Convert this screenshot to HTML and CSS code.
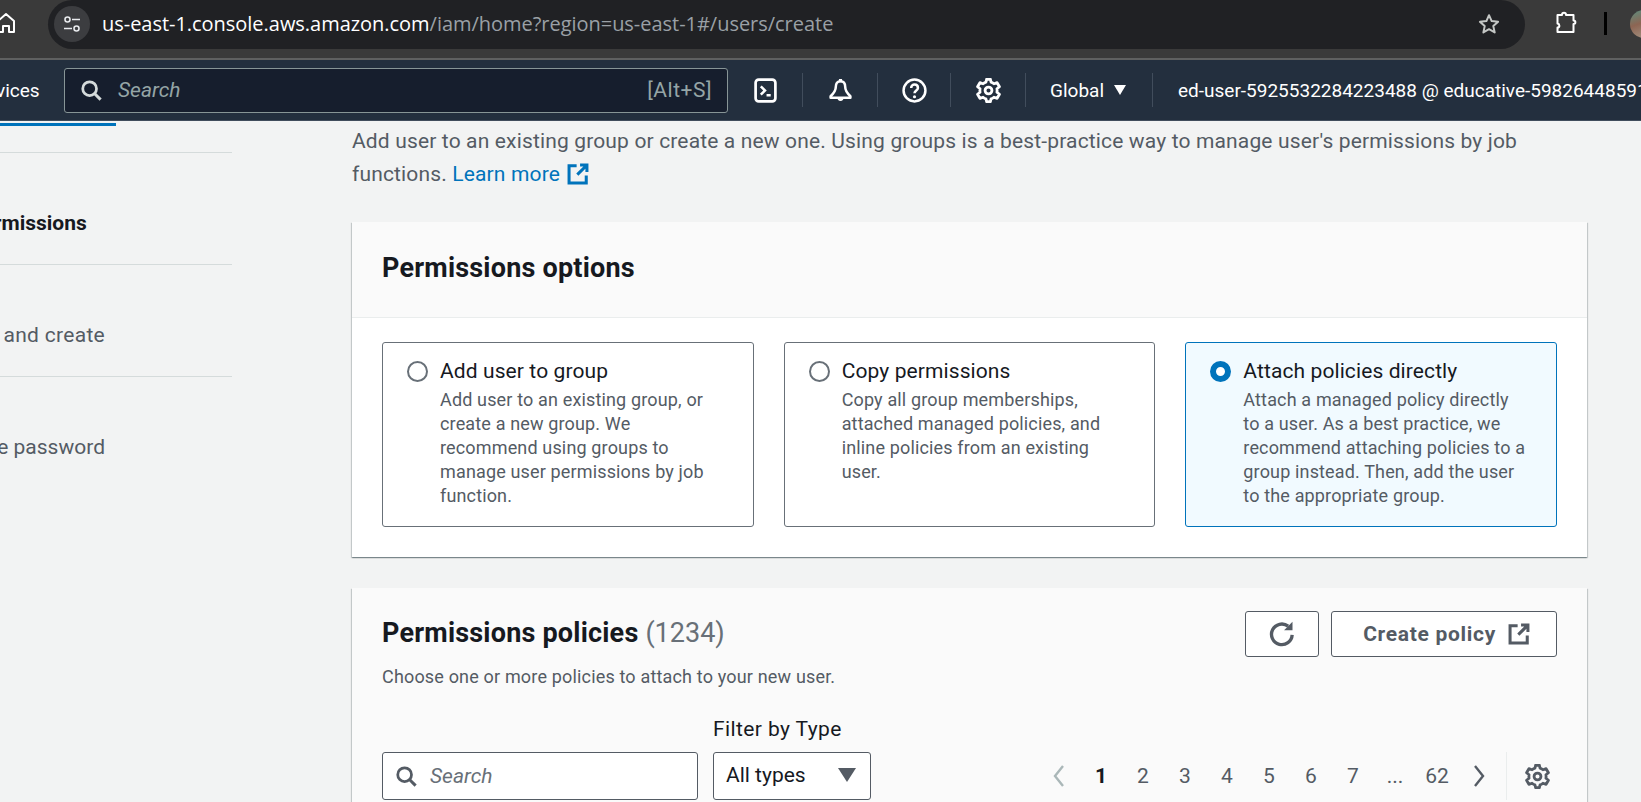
FILE: index.html
```html
<!DOCTYPE html>
<html>
<head>
<meta charset="UTF-8">
<title>Create user | IAM</title>
<link rel="stylesheet" href="styles.css">
</head>
<body>
	<svg class="sprite">
		<symbol id="i-search" viewBox="0 0 16 16"><circle cx="7" cy="7" r="5" fill="none" stroke="currentColor" stroke-width="2"/><path d="M10.7 10.7 15 15" fill="none" stroke="currentColor" stroke-width="2.2"/></symbol>
		<symbol id="i-gear" viewBox="0 0 16 16"><path d="M13.5 8c0-.4 0-.8-.1-1.1l1.6-1.3-1.5-2.6-2 .7c-.6-.5-1.2-.9-1.9-1.1L9.2.8H6.8l-.4 1.8c-.7.2-1.3.6-1.9 1.1l-2-.7L1 5.6l1.6 1.3c-.1.3-.1.7-.1 1.1s0 .8.1 1.1L1 10.4 2.500 13l2-.7c.6.5 1.2.9 1.9 1.1l.4 1.8h2.400l.4-1.8c.7-.2 1.3-.6 1.9-1.1l2 .7 1.500-2.600-1.600-1.300c.1-.3.1-.7.1-1.100z" fill="none" stroke="currentColor" stroke-width="1.800" stroke-linejoin="round"/><circle cx="8" cy="8" r="2.200" fill="none" stroke="currentColor" stroke-width="1.800"/></symbol>
		<symbol id="i-external" viewBox="0 0 16 16"><path d="M7 2H1.500v12.500H14V9M9.500 1.500h5v5M14 2 7.500 8.500" fill="none" stroke="currentColor" stroke-width="2.200"/></symbol>
	</svg>

	<!-- browser chrome -->
	<div class="browser-bar">
		<svg class="home-icon" viewBox="0 0 24 24"><path d="M-2 10 6 3l8 7v11H9v-6H3v6h-5z" fill="none" stroke="#fff" stroke-width="2" stroke-linejoin="round"/></svg>
		<div class="url-pill">
			<span class="site-info">
				<svg viewBox="0 0 20 20" width="20" height="20"><circle cx="5.500" cy="5.500" r="2.500" fill="none" stroke="#e8eaed" stroke-width="1.600"/><path d="M10 5.500h8M2 14.500h8" stroke="#e8eaed" stroke-width="1.600"/><circle cx="14.500" cy="14.500" r="2.500" fill="none" stroke="#e8eaed" stroke-width="1.600"/></svg>
			</span>
			<span class="url"><span class="url-host">us-east-1.console.aws.amazon.com</span>/iam/home?region=us-east-1#/users/create</span>
			<svg class="star-icon" viewBox="0 0 24 24" width="24" height="24"><path d="m12 3.200 2.700 5.900 6.400.7-4.800 4.300 1.400 6.300-5.700-3.200-5.600 3.200 1.300-6.300-4.800-4.300 6.500-.7z" fill="none" stroke="#c4c7c5" stroke-width="2" stroke-linejoin="round"/></svg>
		</div>
		<svg class="puzzle-icon" viewBox="0 0 24 24" width="24" height="24"><path d="M5 5h4.500c0-3 4-3 4 0H21v5.500c2.500 0 2.500 3.500 0 3.500v8H5v-4.500c2.500 0 2.500-3.500 0-4v-8z" fill="none" stroke="#fff" stroke-width="2" stroke-linejoin="round" transform="translate(-1.500 -1)"/></svg>
		<span class="bar-divider"></span>
		<span class="avatar"></span>
	</div>

	<!-- console nav -->
	<div class="top-nav">
		<span class="nav-services">Services</span>
		<div class="nav-search">
			<svg width="22" height="22"><use href="#i-search"/></svg>
			<span class="nav-search-text">Search</span>
			<span class="nav-search-key">[Alt+S]</span>
		</div>
		<div class="nav-cell cell-first">
			<svg viewBox="0 0 24 24" width="25" height="25"><rect x="2.500" y="1.500" width="19" height="21" rx="3" fill="none" stroke="#fff" stroke-width="2.600"/><path d="m7.500 8 4 4-4 4M13 16.500h4" fill="none" stroke="#fff" stroke-width="2.400"/></svg>
		</div>
		<div class="nav-cell cell-bell">
			<svg viewBox="0 0 24 24" width="25" height="25"><path d="M12 3c-3 0-4.500 2.500-4.500 5.500 0 3.500-1 5.500-5 9V19h19v-1.500c-4-3.500-5-5.500-5-9C16.500 5.500 15 3 12 3z" fill="none" stroke="#fff" stroke-width="2.400" stroke-linejoin="round"/><path d="M10.500 1h3v3h-3zM9 19a3 3 0 0 0 6 0z" fill="#fff"/></svg>
		</div>
		<div class="nav-cell cell-help">
			<svg viewBox="0 0 24 24" width="25" height="25"><circle cx="12" cy="12" r="10.500" fill="none" stroke="#fff" stroke-width="2.400"/><path d="M8.800 9.500c0-4.300 6.500-4.300 6.500 0 0 2.500-3.300 2.500-3.300 5.200" fill="none" stroke="#fff" stroke-width="2.400"/><circle cx="12" cy="18" r="1.500" fill="#fff"/></svg>
		</div>
		<div class="nav-cell cell-gear">
			<svg width="25" height="25"><use href="#i-gear"/></svg>
		</div>
		<div class="nav-cell cell-region">Global <span class="region-arrow"></span></div>
		<div class="nav-cell cell-account">ed-user-5925532284223488 @ educative-598264485912</div>
	</div>

	<div class="page">
		<div class="steps">
			<div class="steps-tab"></div>
			<div class="step"><span class="step-text text-1">Set permissions</span></div>
			<div class="step"><span class="step-text text-2">Review and create</span></div>
			<div class="step"><span class="step-text text-3">Retrieve password</span></div>
		</div>

		<div class="content">
			<p class="intro">Add user to an existing group or create a new one. Using groups is a best-practice way to manage user's permissions by job functions. <a class="link">Learn more <svg width="22" height="22"><use href="#i-external"/></svg></a></p>

			<div class="card">
				<div class="card-head">
					<h2>Permissions options</h2>
				</div>
				<div class="options">
					<div class="option">
						<span class="radio"></span>
						<div>
							<div class="option-title">Add user to group</div>
							<div class="option-desc">Add user to an existing group, or create a new group. We recommend using groups to manage user permissions by job function.</div>
						</div>
					</div>
					<div class="option">
						<span class="radio"></span>
						<div>
							<div class="option-title">Copy permissions</div>
							<div class="option-desc">Copy all group memberships, attached managed policies, and inline policies from an existing user.</div>
						</div>
					</div>
					<div class="option selected">
						<span class="radio"></span>
						<div>
							<div class="option-title">Attach policies directly</div>
							<div class="option-desc">Attach a managed policy directly to a user. As a best practice, we recommend attaching policies to a group instead. Then, add the user to the appropriate group.</div>
						</div>
					</div>
				</div>
			</div>

			<div class="card policies">
				<div class="policies-head">
					<div>
						<h2 class="policies-title">Permissions policies <span class="count">(1234)</span></h2>
						<p class="policies-desc">Choose one or more policies to attach to your new user.</p>
					</div>
					<div class="actions">
						<button class="btn btn-icon">
							<svg viewBox="0 0 16 16" width="28" height="28"><path d="M13.800 8.500A5.900 5.900 0 1 1 11.500 3.500" fill="none" stroke="currentColor" stroke-width="1.900"/><path d="M14 1v4.800H9.200z" fill="currentColor"/></svg>
						</button>
						<button class="btn btn-create">Create policy <svg width="22" height="22"><use href="#i-external"/></svg></button>
					</div>
				</div>
				<div class="toolbar">
					<div class="search-box">
						<svg width="22" height="22"><use href="#i-search"/></svg>
						<span class="search-text">Search</span>
					</div>
					<div class="filter">
						<label class="filter-label">Filter by Type</label>
						<div class="select">All types <span class="select-arrow"></span></div>
					</div>
					<div class="pager">
						<span class="page-num"><svg viewBox="0 0 12 24" width="14" height="24"><path d="M10 2 2 12l8 10" fill="none" stroke="#aab7b8" stroke-width="2.400"/></svg></span>
						<span class="page-num current">1</span>
						<span class="page-num">2</span>
						<span class="page-num">3</span>
						<span class="page-num">4</span>
						<span class="page-num">5</span>
						<span class="page-num">6</span>
						<span class="page-num">7</span>
						<span class="page-num">...</span>
						<span class="page-num">62</span>
						<span class="page-num"><svg viewBox="0 0 12 24" width="14" height="24"><path d="m2 2 8 10-8 10" fill="none" stroke="#545b64" stroke-width="2.400"/></svg></span>
						<span class="pager-gear"><svg width="25" height="25"><use href="#i-gear"/></svg></span>
					</div>
				</div>
			</div>
		</div>
	</div>
</body>
</html>
```

FILE: styles.css
```css
* {
	box-sizing: border-box;
}

html, body {
	margin: 0;
	height: 802px;
	overflow: hidden;
}

body {
	background-color: #f2f3f3;
	font-family: "Roboto", "Noto Sans", sans-serif;
	color: #16191f;
	font-size: 21px;
}

.sprite {
	display: none;
}

/* browser chrome */
.browser-bar {
	display: flex;
	align-items: flex-start;
	height: 60px;
	background-color: #3a3a3a;
	border-bottom: 2px solid #5f6060;
	overflow: hidden;
}

.home-icon {
	width: 24px;
	height: 24px;
	margin: 11px 0 0 0;
	flex: none;
}

.url-pill {
	display: flex;
	align-items: center;
	width: 1477px;
	height: 49px;
	margin-left: 24px;
	padding: 0 24px 2px 6px;
	background-color: #202124;
	border-radius: 25px;
	flex: none;
}

.site-info {
	display: flex;
	align-items: center;
	justify-content: center;
	width: 36px;
	height: 36px;
	border-radius: 50%;
	background-color: #3c3d40;
	flex: none;
}

.url {
	margin-left: 12px;
	font-family: "Open Sans", sans-serif;
	font-size: 20px;
	letter-spacing: -0.03px;
	color: #9aa0a6;
	white-space: nowrap;
}

.url-host {
	color: #fff;
}

.star-icon {
	margin-left: auto;
}

.puzzle-icon {
	margin: 11px 0 0 29px;
	flex: none;
}

.bar-divider {
	width: 3px;
	height: 23px;
	margin: 12px 0 0 26px;
	background-color: #000;
	flex: none;
}

.avatar {
	width: 28px;
	height: 28px;
	margin: 10px 0 0 23px;
	border-radius: 50%;
	background: linear-gradient(160deg, #5b8f80 0%, #8d6553 45%, #a89c8c 100%);
	flex: none;
}

/* console nav */
.top-nav {
	display: flex;
	align-items: center;
	height: 61px;
	background-color: #232f3e;
	border-bottom: 1px solid #414d5c;
	color: #fff;
	font-size: 19px;
	white-space: nowrap;
	overflow: hidden;
}

.nav-services {
	margin-left: -32px;
	width: 96px;
	flex: none;
}

.nav-search {
	display: flex;
	align-items: center;
	width: 664px;
	height: 45px;
	padding: 0 15px;
	background-color: #161e2d;
	border: 1px solid #879596;
	border-radius: 3px;
	color: #95a5a6;
	flex: none;
}

.nav-search svg {
	color: #d5dbdb;
}

.nav-search-text {
	margin-left: 16px;
	font-style: italic;
	font-size: 21px;
}

.nav-search-key {
	margin-left: auto;
	font-size: 21px;
	letter-spacing: 0.5px;
}

.nav-cell {
	display: flex;
	align-items: center;
	justify-content: center;
	height: 34px;
	border-left: 1px solid #414d5c;
	flex: none;
}

.cell-first {
	width: 74px;
	border-left: none;
}

.cell-bell {
	width: 75px;
}

.cell-help {
	width: 73px;
}

.cell-gear {
	width: 75px;
}

.cell-region {
	justify-content: flex-start;
	padding-left: 24px;
	width: 127px;
}

.cell-account {
	justify-content: flex-start;
	padding-left: 25px;
	width: 520px;
}

.region-arrow {
	width: 0;
	height: 0;
	margin-left: 10px;
	border-left: 6px solid transparent;
	border-right: 6px solid transparent;
	border-top: 10px solid #fff;
}

/* page */
.page {
	display: flex;
}

.steps {
	width: 232px;
	flex: none;
}

.steps-tab {
	width: 116px;
	height: 3px;
	margin-top: 2px;
	background-color: #0073bb;
}

.step {
	display: flex;
	align-items: center;
	height: 112px;
	padding-top: 29px;
	border-top: 1px solid #d5dbdb;
	color: #545b64;
	font-size: 21px;
	white-space: nowrap;
}

.steps-tab + .step {
	margin-top: 26px;
}

.step-text {
	display: block;
}

.text-1 {
	margin-left: -66px;
	font-weight: 700;
	color: #16191f;
}

.text-2 {
	margin-left: -70px;
	letter-spacing: 0.3px;
}

.text-3 {
	margin-left: -67px;
}

.content {
	width: 1235px;
	margin-left: 120px;
	flex: none;
}

.intro {
	margin: 4px 0 31px;
	line-height: 33px;
	letter-spacing: 0.15px;
	color: #545b64;
}

.link {
	color: #0073bb;
}

.link svg {
	vertical-align: -4px;
	margin-left: 2px;
}

/* cards */
.card {
	background-color: #fff;
	box-shadow: 0 1px 1px 0 rgba(0, 28, 36, 0.3), 1px 1px 1px 0 rgba(0, 28, 36, 0.15), -1px 1px 1px 0 rgba(0, 28, 36, 0.15);
}

.card-head {
	height: 96px;
	padding: 26px 30px;
	background-color: #fafafa;
	border-bottom: 1px solid #eaeded;
}

h2 {
	margin: 0;
	font-size: 27px;
	line-height: 40px;
	font-weight: 700;
	letter-spacing: 0.2px;
}

.options {
	display: grid;
	grid-template-columns: 1fr 1fr 1fr;
	gap: 30px;
	padding: 24px 30px 30px;
}

.option {
	display: flex;
	gap: 12px;
	height: 185px;
	padding: 12px 30px 0 24px;
	border: 1px solid #687078;
	border-radius: 3px;
}

.option.selected {
	background-color: #f1faff;
	border-color: #0073bb;
}

.radio {
	width: 21px;
	height: 21px;
	margin-top: 6px;
	border: 2px solid #687078;
	border-radius: 50%;
	background-color: #fff;
	flex: none;
}

.selected .radio {
	border: 6px solid #0073bb;
}

.option-title {
	line-height: 33px;
	letter-spacing: 0.1px;
}

.option-desc {
	font-size: 18px;
	line-height: 24px;
	letter-spacing: 0.15px;
	color: #545b64;
}

.policies {
	height: 300px;
	margin-top: 31px;
	background-color: #fafafa;
	padding: 23px 30px 0;
}

.policies-head {
	display: flex;
	justify-content: space-between;
	align-items: flex-start;
}

.policies-title {
	line-height: 44px;
}

.count {
	font-weight: 400;
	letter-spacing: 0;
	color: #687078;
}

.policies-desc {
	margin: 10px 0 0;
	font-size: 18px;
	line-height: 24px;
	letter-spacing: 0.17px;
	color: #545b64;
}

.actions {
	display: flex;
	gap: 12px;
}

.btn {
	display: flex;
	align-items: center;
	gap: 12px;
	height: 46px;
	padding: 0 26px 0 31px;
	background-color: #fff;
	border: 1px solid #545b64;
	border-radius: 3px;
	color: #545b64;
	font-family: inherit;
	font-size: 21px;
	font-weight: 700;
}

.btn-create {
	letter-spacing: 0.7px;
}

.btn-icon {
	justify-content: center;
	width: 74px;
	padding: 0;
}

.toolbar {
	display: flex;
	align-items: flex-end;
	margin-top: 24px;
}

.search-box {
	display: flex;
	align-items: center;
	gap: 13px;
	width: 316px;
	height: 48px;
	padding: 0 12px;
	background-color: #fff;
	border: 1px solid #545b64;
	border-radius: 3px;
	color: #545b64;
}

.search-text {
	font-style: italic;
	color: #687078;
}

.filter {
	width: 158px;
	margin-left: 15px;
}

.filter-label {
	display: block;
	line-height: 33px;
	margin-bottom: 6px;
	letter-spacing: 0.4px;
}

.select {
	display: flex;
	align-items: center;
	justify-content: space-between;
	height: 48px;
	padding: 0 14px 2px 12px;
	background-color: #fff;
	border: 1px solid #545b64;
	border-radius: 3px;
}

.select-arrow {
	width: 0;
	height: 0;
	border-left: 9px solid transparent;
	border-right: 9px solid transparent;
	border-top: 14px solid #545b64;
}

.pager {
	display: flex;
	align-items: center;
	height: 48px;
	margin-left: auto;
	margin-right: 7px;
	color: #545b64;
}

.page-num {
	display: flex;
	align-items: center;
	justify-content: center;
	width: 42px;
}

.page-num.current {
	font-weight: 700;
	color: #16191f;
}

.pager-gear {
	display: flex;
	align-items: center;
	height: 48px;
	margin-left: 6px;
	padding-left: 18px;
	border-left: 1px solid #eaeded;
}
```
